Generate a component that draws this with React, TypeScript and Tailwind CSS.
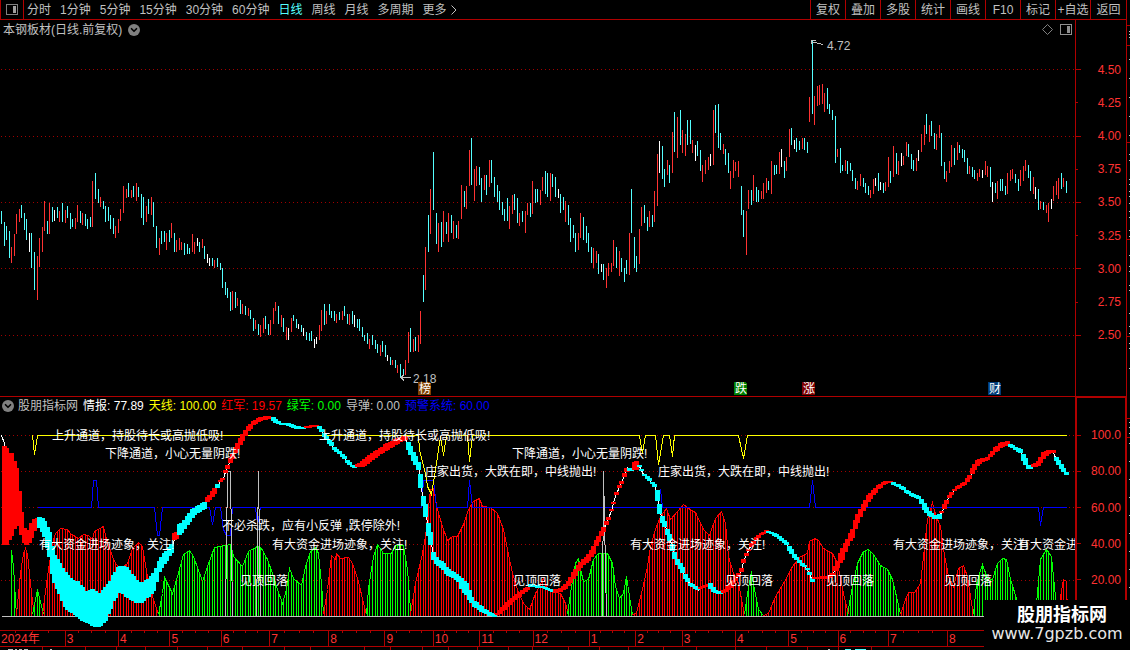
import { ChevronDown } from 'lucide-react'

type Candle = { tone: string; x: number; top: number; bottom: number }
type Point = [number, number]
type BandPoint = [number, number, number]

const periods = ['分时', '1分钟', '5分钟', '15分钟', '30分钟', '60分钟', '日线', '周线', '月线', '多周期']
const tools = ['复权', '叠加', '多股', '统计', '画线', 'F10', '标记', '+自选', '返回']
const prices = ['4.50', '4.25', '4.00', '3.75', '3.50', '3.25', '3.00', '2.75', '2.50']
const levels = ['100.0', '80.00', '60.00', '40.00', '20.00']

const legend = [
  { name: '情报', value: '77.89', color: 'text-white' },
  { name: '天线', value: '100.00', color: 'text-[#ffff00]' },
  { name: '红军', value: '19.57', color: 'text-[#ff0000]' },
  { name: '绿军', value: '0.00', color: 'text-[#00ff00]' },
  { name: '导弹', value: '0.00', color: 'text-[#c0c0c0]' },
  { name: '预警系统', value: '60.00', color: 'text-[#0000ff]' },
]

const months = [
  { label: '2024年', span: 66 },
  { label: '3', span: 53 },
  { label: '4', span: 51 },
  { label: '5', span: 51 },
  { label: '6', span: 48 },
  { label: '7', span: 59 },
  { label: '8', span: 56 },
  { label: '9', span: 48 },
  { label: '10', span: 46 },
  { label: '11', span: 53 },
  { label: '12', span: 56 },
  { label: '1', span: 46 },
  { label: '2', span: 46 },
  { label: '3', span: 53 },
  { label: '4', span: 53 },
  { label: '5', span: 49 },
  { label: '6', span: 50 },
  { label: '7', span: 59 },
  { label: '8', span: 183 },
]

// tone, x, high, low
const candleData = `
c1,211,224 c4,222,246 c6,226,240 c9,231,258 r11,247,263 r14,234,256 r16,214,234 r19,209,222 c21,205,218 c24,213,230
c26,219,240 w29,233,252 c31,233,268 c34,252,290 r37,256,300 r39,238,267 r42,227,252 r44,201,231 c47,221,234 r49,203,234
c52,207,222 w54,210,221 c57,207,218 r59,211,222 c62,203,222 r65,210,223 c67,206,218 c70,213,229 c72,219,227 r75,218,229
r77,205,222 c80,211,223 r82,213,225 c85,214,226 c87,219,229 c90,217,227 r92,181,227 c95,173,199 c98,189,203 r100,197,207
c103,201,209 c105,206,222 c108,207,221 c110,215,229 c113,218,234 r115,226,238 r118,219,233 r120,209,221 r123,186,213
r126,189,198 c128,183,197 r131,190,198 c133,186,197 r136,183,201 c138,187,197 c141,194,218 c143,197,225 r146,206,222
c148,199,214 r151,197,215 c153,202,227 c156,226,248 r159,238,255 c161,231,244 c164,231,242 r166,233,250 c169,230,242
r171,223,238 c174,233,252 r176,240,252 r179,238,250 r181,242,250 c184,243,255 c187,244,254 c189,248,254 r192,234,252
r194,242,254 w197,238,246 c199,242,252 r202,239,248 c204,246,259 w207,254,263 w209,258,266 c212,258,266 r214,260,268
c217,258,267 c220,263,270 c222,268,288 c225,282,295 c227,288,298 c230,292,311 r232,291,310 c235,292,308 r237,298,306
c240,300,314 r242,304,314 c245,306,315 r248,308,316 c250,310,319 c253,318,331 r255,320,329 c258,324,335 r260,325,337
r263,318,333 c265,316,329 c268,324,335 r270,320,335 r273,308,324 r275,302,311 c278,306,324 r281,315,327 c283,318,332
r286,327,340 w288,328,340 r291,318,332 c293,315,321 c296,319,328 w298,324,329 c301,325,332 w303,328,336 c306,332,340
c309,333,341 c311,331,341 w314,339,348 w316,337,344 r319,325,340 r321,310,331 c324,304,325 r326,311,324 c329,304,315
c331,311,318 c334,311,321 r336,314,323 c339,312,320 r342,311,320 c344,306,316 c347,314,324 r349,314,325 c352,311,324
w354,315,327 c357,319,328 c359,319,331 c362,327,337 c364,335,341 c367,333,344 r369,339,349 c372,335,345 c375,340,349
c377,344,353 r380,345,356 c382,341,352 c385,345,357 w387,355,361 c390,357,365 r392,360,365 c395,360,368 r397,365,373
c400,364,378 c403,369,376 r405,360,375 r408,332,363 c410,328,352 r413,339,352 c415,337,351 r418,335,352 r420,311,344
c423,275,302 r425,247,290 c428,215,252 r430,189,234 c433,152,210 c436,213,244 r438,223,252 c441,222,247 r443,211,242
c446,222,234 r448,213,242 c451,215,233 r453,221,239 c456,225,238 r458,221,239 r461,185,219 c464,191,207 r466,186,209
r469,150,186 c471,138,185 r474,169,201 r476,166,186 c479,167,185 c481,178,202 r484,175,190 c486,175,195 r489,160,187
c491,160,183 c494,177,197 c497,185,202 c499,191,210 c502,202,215 c504,209,221 c507,198,221 r509,206,229 r512,195,214
c514,194,210 c517,198,223 r519,213,226 c522,211,222 r525,211,233 r527,203,215 c530,203,217 r532,181,214 c535,189,203
c537,189,202 r540,190,205 r542,177,191 c545,171,194 c547,173,197 r550,173,201 c552,174,187 c555,177,197 w558,189,198
c560,194,213 c563,197,210 r565,201,222 c568,205,225 c570,218,242 c573,225,238 c575,233,252 r578,233,250 r580,213,238
c583,217,240 c586,226,243 c588,233,252 c591,247,263 r593,248,268 r596,251,263 c598,254,274 w601,264,272 c603,264,280
r606,268,288 r608,263,276 r611,263,272 r613,240,266 c616,247,268 r619,251,276 c621,258,272 c624,268,282 c626,260,274
r629,233,275 c631,189,233 c634,237,268 c636,256,272 r639,229,264 r641,207,226 c644,205,223 c647,217,231 r649,211,227
c652,215,227 r654,191,222 r657,154,206 w659,141,173 c662,146,179 c664,169,187 r667,160,175 c669,165,183 r672,132,173
c674,112,152 r677,117,158 c680,110,145 r682,130,153 r685,134,156 c687,120,145 c690,120,144 r692,140,153 w695,145,161
c697,141,156 c700,150,171 r702,165,182 r705,160,174 r708,157,170 w710,154,166 r713,110,165 c715,105,133 c718,104,148
c720,133,150 r723,144,154 c725,149,165 c728,153,173 r730,171,189 r733,160,178 r735,162,171 r738,161,177 c741,186,215
c743,210,237 r746,211,255 r748,190,209 c751,190,205 r753,175,201 c756,187,202 c758,190,202 r761,191,199 r763,183,199
r766,178,193 c768,181,190 r771,161,194 c774,165,175 c776,165,174 r779,152,174 w781,149,167 c784,161,178 r786,157,171
r789,129,157 c791,128,145 w794,140,149 c796,138,152 c799,141,150 r802,138,149 c804,138,150 c807,142,153 r809,97,122
c812,41,114 r814,96,125 r817,86,106 r819,85,105 r822,84,104 r824,93,112 c827,88,109 c829,104,114 c832,110,120
c835,116,163 r837,149,157 c840,148,173 c842,165,171 r845,160,171 c847,161,174 c850,163,171 c852,170,181 c855,178,189
r857,181,190 r860,174,186 c863,178,187 c865,183,193 c868,186,195 r870,190,198 r873,179,194 w875,178,186 c878,173,191
w880,182,190 c883,183,193 r885,182,191 r888,157,187 c890,171,183 r893,146,177 c896,153,174 r898,161,175 w901,153,166
r903,156,165 r906,142,156 c908,144,157 c911,154,169 c913,160,171 r916,158,171 w918,150,161 r921,134,152 r924,125,145
c926,114,134 r929,125,142 c931,121,136 c934,133,149 r936,134,150 r939,125,138 c941,133,166 c944,162,179 r946,171,182
r949,161,173 r951,145,167 c954,148,165 r957,142,160 c959,145,153 c962,149,158 c964,150,162 c967,158,174 r969,166,174
c972,167,177 c974,170,179 r977,173,181 r979,169,177 w982,170,178 r985,161,175 r987,166,177 c990,167,187 w992,182,202
c995,183,193 r997,181,199 c1000,179,191 c1002,179,191 c1005,186,195 r1007,173,194 r1010,170,181 r1012,169,179
c1015,174,183 c1018,179,191 r1020,170,186 r1023,166,181 r1025,160,171 c1028,165,178 c1030,171,191 r1033,177,194
w1035,187,199 c1038,189,210 r1040,201,209 c1043,202,210 r1046,205,213 r1048,203,222 w1051,199,209 r1053,186,201
r1056,181,195 r1058,178,199 c1061,173,189 r1063,178,187 c1066,181,193`

const candles: Candle[] = candleData
  .trim()
  .split(/\s+/)
  .map((item) => {
    const [x, top, bottom] = item.slice(1).split(',').map(Number)
    return { tone: item[0], x, top, bottom }
  })

const candleColor: Record<string, string> = { c: '#54ffff', r: '#ff3232', w: '#ffffff' }

// outlines of the red and green areas, each closed on the zero line
const humps = [
  { color: '#00ff00', points: '11,616 11,550 13,566 15,600 16,614' },
  { color: '#ff0000', points: '16,614 20,573 23,553 25,548 27,554 30,583 33,609' },
  { color: '#00ff00', points: '32,614 37,589 43,614' },
  {
    color: '#ff0000',
    points:
      '42,614 47,576 52,543 55,533 60,528 67,529 70,533 78,538 83,534 88,535 92,539 94,531 103,526 106,539 113,559 119,569 127,563 132,548 138,542 142,546 147,576 153,599 158,614',
  },
  {
    color: '#00ff00',
    points:
      '158,614 162,593 164,577 172,593 177,576 183,554 189,550 193,556 202,581 207,566 214,547 230,544 233,556 242,566 248,551 257,546 261,548 267,559 272,573 277,589 282,603 286,589 289,568 293,578 301,585 305,566 310,551 315,547 318,553 321,583 323,614',
  },
  {
    color: '#ff0000',
    points: '323,614 327,589 331,555 335,559 336,553 340,558 348,557 352,563 358,581 363,603 366,614',
  },
  { color: '#00ff00', points: '366,614 368,588 373,556 377,544 383,553 391,553 395,545 403,545 407,569 410,609' },
  {
    color: '#ff0000',
    points:
      '410,614 415,583 422,553 425,536 430,489 433,488 437,509 442,526 447,540 452,536 457,536 463,524 468,509 473,501 479,498 482,506 490,507 497,513 503,529 507,549 512,573 517,589 523,603 529,609 535,593 543,578 547,588 560,593 565,603 568,614',
  },
  {
    color: '#00ff00',
    points:
      '567,614 570,593 575,563 578,558 581,573 583,581 588,579 593,559 598,553 607,553 612,563 615,586 619,598 623,593 626,576 631,609 632,614',
  },
  {
    color: '#ff0000',
    points:
      '632,614 636,613 642,589 647,566 650,546 655,529 660,516 666,508 670,519 677,511 683,504 688,508 695,512 703,529 709,535 715,518 721,511 725,523 728,556 733,573 738,583 744,614',
  },
  { color: '#00ff00', points: '744,614 747,593 751,571 754,589 758,609 763,615' },
  {
    color: '#ff0000',
    points:
      '763,615 768,613 775,596 783,583 792,566 800,556 807,553 809,541 814,538 818,540 823,548 832,553 837,563 843,593 848,614',
  },
  { color: '#00ff00', points: '847,614 852,586 857,563 863,551 868,549 873,554 880,565 887,569 892,579 896,596 900,614' },
  {
    color: '#ff0000',
    points:
      '900,614 905,599 908,592 914,592 920,583 923,556 927,519 932,502 935,514 940,526 943,549 948,576 953,586 958,568 963,565 967,576 970,596 973,614',
  },
  { color: '#00ff00', points: '973,614 976,583 982,564 987,578 992,579 997,563 1002,558 1006,559 1010,579 1017,601 1020,614' },
  { color: '#00ff00', points: '1035,614 1040,559 1046,549 1051,556 1055,596 1057,614' },
  { color: '#ff0000', points: '1057,614 1063,579 1066,581 1067,614' },
]

// the thick trend band: x, upper edge, lower edge
const bands = [
  {
    color: '#ff0000',
    points:
      '2,444,545 6,448,545 9,453,540 11,453,536 14,461,529 17,472,523 19,491,526 22,523,539 25,531,545 29,530,543 32,520,535 35,518,529 37,518,527',
  },
  {
    color: '#00ffff',
    points:
      '38,517,528 41,516,529 45,523,539 48,529,553 51,539,566 53,553,581 57,559,589 61,567,599 64,570,606 68,576,611 72,580,613 77,581,617 81,586,620 85,591,622 89,591,623 92,589,626 97,593,627 101,593,625 105,587,621 109,583,612 113,575,601 117,568,594 120,566,591 125,566,596 129,571,598 133,576,601 137,581,603 141,583,603 145,580,598 149,578,596 153,573,591 157,566,579 160,558,569 164,553,564 168,548,558 173,541,549',
  },
  { color: '#ff0000', points: '174,533,540 178,530,538' },
  { color: '#00ffff', points: '179,524,535 183,521,530 187,516,525 190,511,521 193,508,516 197,506,513 201,503,511 205,501,508' },
  { color: '#ff0000', points: '207,497,502 211,492,498 215,487,493' },
  { color: '#00ffff', points: '216,484,488 218,483,487' },
  {
    color: '#ff0000',
    points:
      '219,481,483 223,477,479 225,470,473 228,462,467 231,456,461 233,451,456 237,443,449 241,436,443 244,431,437 248,426,431 252,421,426 256,419,423 260,417,421 267,416,419 272,417,419',
  },
  { color: '#00ffff', points: '273,417,421 277,420,424 280,423,425 287,423,425 291,424,427 297,426,429 305,427,429' },
  { color: '#ff0000', points: '306,426,428 314,425,427 318,425,427' },
  {
    color: '#00ffff',
    points: '319,426,429 322,430,434 325,435,439 330,441,445 335,448,451 342,454,457 347,460,463 352,465,467 356,466,468',
  },
  { color: '#ff0000', points: '357,464,467 362,461,467 367,457,464 372,453,460 380,448,454 387,443,450 393,440,446 400,437,442 405,436,440' },
  {
    color: '#00ffff',
    points:
      '407,440,448 413,452,461 418,462,470 420,474,488 423,496,506 426,508,523 428,523,536 431,537,550 433,552,560 437,559,565 442,562,569 448,569,576 457,575,580 462,579,591 467,584,596 472,600,605 477,603,609 483,608,613 490,613,616 495,614,617',
  },
  { color: '#ff0000', points: '497,613,615 500,609,613 507,602,607 513,597,601 520,591,596 528,586,589' },
  { color: '#00ffff', points: '530,584,587 543,586,588 552,590,592' },
  {
    color: '#ff0000',
    points:
      '553,590,593 560,588,592 567,583,588 570,577,583 575,569,576 580,562,568 587,556,562 592,548,556 597,538,544 602,529,534 607,519,523 611,509,511 615,494,497 621,481,484 624,473,477 627,466,469',
  },
  { color: '#00ffff', points: '629,468,471 632,468,471' },
  { color: '#ff0000', points: '633,463,470 636,461,470 638,464,467' },
  {
    color: '#00ffff',
    points:
      '639,465,467 643,473,475 647,476,479 652,482,484 655,485,489 657,490,501 659,504,514 662,516,523 665,524,529 668,531,538 672,544,551 675,556,563 680,563,569 685,574,579 690,583,586 698,588,591',
  },
  { color: '#ff0000', points: '700,587,589 708,584,586' },
  { color: '#00ffff', points: '710,583,589 716,591,594 720,591,594' },
  {
    color: '#ff0000',
    points: '722,591,594 727,588,591 730,583,588 735,578,581 741,568,572 743,559,563 747,551,553 750,544,548 757,536,539 762,532,534 767,530,532',
  },
  { color: '#00ffff', points: '768,531,533 777,534,537 787,543,546 790,548,553 797,558,561 807,568,570 810,574,578 812,578,582' },
  {
    color: '#ff0000',
    points:
      '814,577,579 827,576,579 832,573,576 837,561,568 842,548,560 847,539,546 852,529,538 857,514,523 862,506,513 867,496,503 872,491,496 878,485,489 885,481,484 890,481,483',
  },
  { color: '#00ffff', points: '892,482,484 902,486,489 910,493,496 918,496,499 923,501,508 927,509,514 933,515,519 939,514,519' },
  {
    color: '#ff0000',
    points:
      '941,511,513 944,504,509 947,498,501 952,491,493 958,485,488 965,482,485 970,473,478 973,465,472 978,459,464 988,457,459 993,449,454 1000,443,448 1007,441,445',
  },
  { color: '#00ffff', points: '1009,444,446 1020,449,453 1024,455,464 1028,465,469 1031,467,469' },
  { color: '#ff0000', points: '1032,465,467 1038,461,466 1043,452,459 1048,450,454 1053,450,453' },
  { color: '#00ffff', points: '1054,454,456 1057,458,463 1062,466,471 1067,474,476' },
]

const skyLine =
  '37,435 418,435 419,449 425,473 427,486 431,494 434,476 438,449 440,436 443,455 446,435 467,435 469,461 472,435 639,435 642,453 645,435 655,435 658,464 663,435 669,435 672,456 674,435 738,435 743,458 747,435 1066,435'

const warnLine =
  '37,507 91,507 93,480 96,480 98,507 154,507 157,535 159,535 162,507 209,507 212,524 215,507 220,507 223,529 226,535 230,535 232,507 255,507 257,524 260,507 421,507 423,480 433,480 436,507 467,507 469,480 472,507 657,507 660,489 662,507 809,507 812,480 815,507 1038,507 1040,525 1043,507 1066,507'

const notes = [
  { text: '上升通道，持股待长或高抛低吸!', y: 435, xs: [52, 319] },
  { text: '下降通道，小心无量阴跌!', y: 453, xs: [105, 512] },
  { text: '庄家出货，大跌在即，中线抛出!', y: 471, xs: [425, 658] },
  { text: '不必杀跌，应有小反弹 ,跌停除外!', y: 525, xs: [222] },
  { text: '有大资金进场迹象，关注!', y: 544, xs: [39, 272, 630, 893, 1018] },
  { text: '见顶回落', y: 580, xs: [240, 513, 725, 826, 944] },
]

const badges = [
  { text: '榜', x: 418, fill: '#804000' },
  { text: '跌', x: 734, fill: '#008000' },
  { text: '涨', x: 802, fill: '#800000' },
  { text: '财', x: 988, fill: '#003c78' },
]

const gutterMarks = [31, 34, 37, 59, 78, 97, 116, 135, 154, 160, 179, 184, 191, 196, 203, 211, 217, 230, 236, 255, 266, 271, 285, 290, 313, 326, 333, 343, 348, 368, 422, 427, 433, 443, 461, 479, 497, 515, 533, 551, 569, 587]
const gutterLines = [25, 45, 142, 239, 336, 418, 437]
const footTicks = [42, 85, 116, 145, 177, 207, 242, 284, 310, 364, 390, 422, 448, 477, 508, 532, 568, 599, 628, 663, 696, 735, 766, 807, 838, 871]

function parse<T>(points: string): T[] {
  return points.split(' ').map((p) => p.split(',').map(Number) as T)
}

function lerp(points: number[][], x: number, key: number) {
  for (let i = 1; i < points.length; i++) {
    const a = points[i - 1]
    const b = points[i]
    if (x >= a[0] && x <= b[0]) {
      if (a[0] === b[0]) return b[key]
      return Math.round(a[key] + ((b[key] - a[key]) * (x - a[0])) / (b[0] - a[0]))
    }
  }
  return null
}

function Collapse({ label }: { label: string }) {
  return (
    <button type="button" aria-label={label} className="flex size-3 items-center justify-center rounded-full bg-[#808080]">
      <ChevronDown className="size-2.5 text-black" strokeWidth={4} />
    </button>
  )
}

function Toolbar() {
  return (
    <header className="flex h-5 items-stretch border-r border-b border-[#b00000] text-[#c0c0c0]">
      <button type="button" aria-label="侧栏" className="flex w-6 items-center justify-center border-x border-[#b00000]">
        <svg width="12" height="11" viewBox="0 0 12 11" shapeRendering="crispEdges">
          <rect x="0.5" y="0.5" width="11" height="10" rx="1" fill="none" stroke="#808080" />
          <rect x="7" y="2" width="3" height="7" fill="#a0a0a0" />
        </svg>
      </button>
      <nav className="flex items-center gap-[9px] pl-[3px]">
        {periods.map((p) => (
          <button key={p} type="button" className={p === '日线' ? 'text-[#54ffff]' : 'hover:text-white'}>
            {p}
          </button>
        ))}
        <button type="button" className="flex items-center gap-1 hover:text-white">
          更多
          <svg width="6" height="10" viewBox="0 0 6 10">
            <path d="M0.5 0.5L5 5L0.5 9.5" fill="none" stroke="currentColor" />
          </svg>
        </button>
      </nav>
      <div className="ml-auto flex">
        {tools.map((t) => (
          <button key={t} type="button" className="w-[35px] border-l border-[#b00000] text-center whitespace-nowrap last:w-9 hover:text-white">
            {t}
          </button>
        ))}
      </div>
    </header>
  )
}

function PriceChart() {
  return (
    <svg className="block h-[357px] w-full" viewBox="0 39 1075 357" preserveAspectRatio="none" shapeRendering="crispEdges">
      {[69, 136, 202, 268, 335].map((y) => (
        <line key={y} x1="1" x2="1075" y1={y + 0.5} y2={y + 0.5} stroke="#a00000" strokeDasharray="1 3" />
      ))}
      {candles.map((c) => (
        <rect key={c.x} x={c.x} y={c.top} width="1" height={c.bottom - c.top} fill={candleColor[c.tone]} />
      ))}
      <path d="M811.5 44V40.5H816M812 42.5h3l8 2" fill="none" stroke="#c0c0c0" />
      <text x="827" y="50" fill="#c0c0c0">
        4.72
      </text>
      <path d="M411 377.5H401M404 374.5L401 377.5L404 380.5" fill="none" stroke="#c0c0c0" />
      <text x="413" y="383" fill="#c0c0c0">
        2.18
      </text>
      {badges.map((b) => (
        <g key={b.text}>
          <path d={`M${b.x} 382h11l2 2v11h-13z`} fill={b.fill} />
          <text x={b.x + 1} y="393" fill="#ffffff">
            {b.text}
          </text>
        </g>
      ))}
    </svg>
  )
}

function Hump({ color, points }: { color: string; points: string }) {
  const outline = parse<Point>(points)
  return (
    <g>
      {candles.map(({ x }) => {
        const y = lerp(outline, x, 1)
        return y === null ? null : <rect key={x} x={x} y={y} width="1" height={616 - y} fill={color} />
      })}
      <polyline points={points} transform="translate(0.5 0.5)" fill="none" stroke={color} />
    </g>
  )
}

function Band({ color, points }: { color: string; points: string }) {
  const edge = parse<BandPoint>(points)
  return (
    <g fill={color}>
      {candles.map(({ x }) => {
        const top = lerp(edge, x, 1)
        const bottom = lerp(edge, x, 2)
        if (top === null || bottom === null) return null
        return <rect key={x} x={x - 2} y={top} width="5" height={Math.max(2, bottom - top)} />
      })}
    </g>
  )
}

function SignalChart() {
  const spine = bands
    .flatMap((b) => parse<BandPoint>(b.points))
    .map(([x, top, bottom]) => `${x},${(top + bottom) / 2}`)
    .join(' ')

  return (
    <svg className="block h-[216px] w-full" viewBox="0 414 1075 216" preserveAspectRatio="none" shapeRendering="crispEdges">
      {[435, 471, 507, 544, 580].map((y) => (
        <line key={y} x1="1" x2="1075" y1={y + 0.5} y2={y + 0.5} stroke="#a00000" strokeDasharray="1 3" />
      ))}
      {humps.map((h) => (
        <Hump key={h.points} {...h} />
      ))}
      <g fill="none" transform="translate(0.5 0.5)">
        <polyline points={warnLine} stroke="#0000ff" />
        <polyline points="32,435 34,454 37,435" stroke="#ffff00" />
        <polyline points={skyLine} stroke="#ffff00" />
        <path d="M1 616H1066M225 616L227 471H230L232 616M256 616L258 471L260 616M602 616L603 471L606 616" stroke="#c0c0c0" />
        <polyline points={`1,435 4,443 ${spine}`} stroke="#ffffff" />
      </g>
      {bands.map((b) => (
        <Band key={b.points} {...b} />
      ))}
      {notes.map((n) =>
        n.xs.map((x) => (
          <text key={n.text + x} x={x} y={n.y + 5} fill="#ffffff">
            {n.text}
          </text>
        )),
      )}
    </svg>
  )
}

function DateAxis() {
  return (
    <div className="flex h-[17px] border-y border-r border-[#b00000] text-[#ff3232]">
      {months.map((m, i) => (
        <div
          key={i}
          className="relative min-w-0 basis-0 border-l border-[#b00000] pl-px leading-[16px] first:border-l-0"
          style={{ flexGrow: m.span }}
        >
          {m.label}
          <div className="absolute inset-x-0 top-0 flex justify-evenly">
            <i className="h-0.5 w-px bg-[#b00000]" />
            <i className="h-0.5 w-px bg-[#b00000]" />
            <i className="h-0.5 w-px bg-[#b00000]" />
          </div>
        </div>
      ))}
    </div>
  )
}

export default function App() {
  return (
    <div className="relative flex min-h-screen overflow-hidden bg-black font-['Liberation_Sans','Noto_Sans_CJK_SC',sans-serif] text-[12px] leading-4 text-white">
      <div className="min-w-0 flex-1">
        <Toolbar />

        <section className="flex">
          <div className="min-w-0 flex-1">
            <div className="flex h-[19px] items-center gap-1.5 pl-[3px] text-[#c0c0c0]">
              <h1>本钢板材(日线.前复权)</h1>
              <Collapse label="展开行情" />
              <div className="ml-auto flex items-center gap-[7px] pr-[3px]">
                <svg width="11" height="11" viewBox="0 0 11 11">
                  <path d="M5.5 0.5L10.5 5.5L5.5 10.5L0.5 5.5Z" fill="none" stroke="#808080" />
                </svg>
                <svg width="12" height="11" viewBox="0 0 12 11" shapeRendering="crispEdges">
                  <rect x="0.5" y="0.5" width="11" height="10" rx="1" fill="none" stroke="#909090" />
                  <rect x="7" y="2" width="3" height="7" fill="#909090" />
                </svg>
              </div>
            </div>
            <PriceChart />
          </div>
          <div className="w-[52px] border-x border-[#b00000] pt-[33px] text-[#ff3232]">
            <div className="flex h-[299px] flex-col">
              {prices.map((p, i) => (
                <div key={p} className="flex flex-1 items-center justify-between pr-[5px]">
                  <i className={i % 2 ? 'h-px w-0.5 bg-[#b00000]' : 'h-px w-[5px] bg-[#b00000]'} />
                  {p}
                </div>
              ))}
            </div>
          </div>
        </section>

        <section className="flex">
          <div className="min-w-0 flex-1 border-t border-[#b00000]">
            <div className="flex h-[17px] items-center gap-[5px] pl-0.5 whitespace-nowrap">
              <Collapse label="展开指标" />
              <h2 className="-ml-px text-[#c0c0c0]">股朋指标网</h2>
              {legend.map((l) => (
                <span key={l.name} className={l.color}>
                  {l.name}: {l.value}
                </span>
              ))}
            </div>
            <SignalChart />
          </div>
          <div className="w-[52px] border-2 border-b-0 border-[#b00000] pt-[19px] text-[#ff3232]">
            <div className="flex h-[181px] flex-col">
              {levels.map((l) => (
                <div key={l} className="flex flex-1 items-center justify-between pr-1">
                  <i className="h-px w-1 bg-[#b00000]" />
                  {l}
                </div>
              ))}
            </div>
          </div>
        </section>

        <DateAxis />
        <svg className="block h-[3px] w-full" viewBox="0 0 1127 3" preserveAspectRatio="none" shapeRendering="crispEdges">
          {footTicks.map((x) => (
            <rect key={x} x={x} y="0" width="1" height="3" fill="#b00000" />
          ))}
          <path d="M8 2.5h5M15 2.5h2M19 2.5h3M24 2.5h4M50 2.5h2M828 2.5h2" stroke="#c0c0c0" />
          <path d="M845 2.5h6M855 2.5h11" stroke="#54ffff" />
        </svg>
      </div>

      <svg className="h-[650px] w-[3px] shrink-0" viewBox="0 0 3 650" shapeRendering="crispEdges">
        {gutterLines.map((y) => (
          <rect key={y} x="0" y={y} width="3" height="1" fill="#b00000" />
        ))}
        {gutterMarks.map((y) => (
          <rect key={y} x="2" y={y} width="1" height="1" fill="#c0c0c0" />
        ))}
      </svg>

      <div className="absolute right-0 bottom-0 flex h-[50px] w-[146px] flex-col items-center bg-black pt-[5px]">
        <span className="pl-2.5 text-[18px] leading-5 font-bold">股朋指标网</span>
        <span className="font-['DejaVu_Sans',sans-serif] text-[16px] leading-[18px] text-[#e8e8e8]">www.7gpzb.com</span>
      </div>
    </div>
  )
}
